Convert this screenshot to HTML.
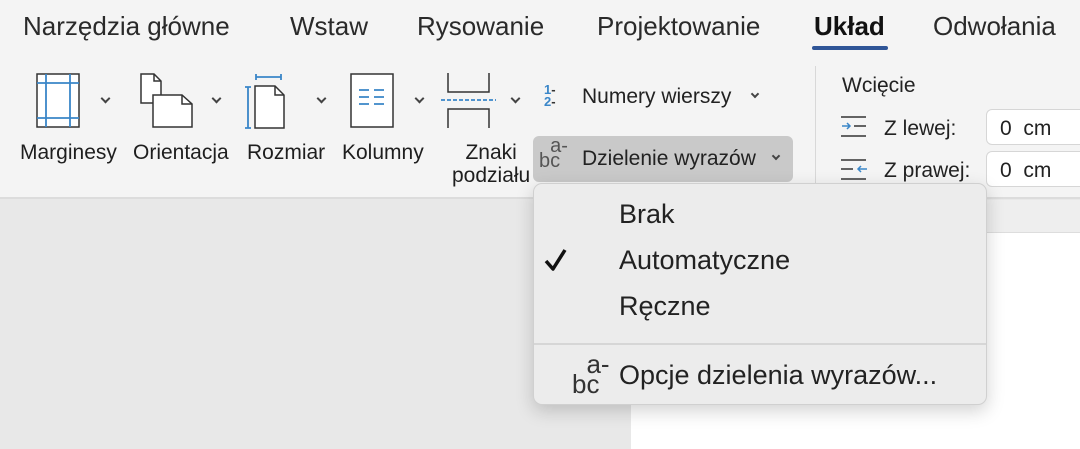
<!DOCTYPE html>
<html><head><meta charset="utf-8"><style>
*{margin:0;padding:0;box-sizing:border-box}
body{width:1080px;height:449px;overflow:hidden;background:#e8e8e8;font-family:"Liberation Sans",sans-serif;color:#222;position:relative}
.rib{position:absolute;left:0;top:0;width:1080px;height:199px;background:#f4f4f4;border-bottom:2px solid #dcdcdc}
.t{position:absolute;top:11px;font-size:26px;color:#2a2a2a;white-space:nowrap}
.lbl{position:absolute;font-size:21px;color:#1e1e1e;text-align:center;line-height:23px;white-space:nowrap}
.chev{position:absolute;width:7px;height:7px;border-right:2px solid #444;border-bottom:2px solid #444;transform:rotate(45deg)}
svg{position:absolute}
.inp{position:absolute;background:#fff;border:1px solid #d6d6d6;border-radius:6px;font-size:21px;padding:7px 0 0 13px;height:36px;width:120px}
.menu{position:absolute;left:533px;top:183px;width:454px;height:222px;background:#ececec;border:1px solid #d0d0d0;border-radius:9px;box-shadow:0 6px 18px rgba(0,0,0,.18)}
.mi{position:absolute;left:85px;font-size:27px;color:#222;white-space:nowrap}
</style></head><body>
<div style="position:absolute;left:631px;top:233px;width:449px;height:216px;background:#fff"></div>
<div style="position:absolute;left:631px;top:200px;width:449px;height:33px;background:#eeeeee;border-bottom:1px solid #ddd"></div>
<div class="rib">
<div class="t" style="left:23px">Narzędzia główne</div>
<div class="t" style="left:290px">Wstaw</div>
<div class="t" style="left:417px">Rysowanie</div>
<div class="t" style="left:597px">Projektowanie</div>
<div class="t" style="left:814px;font-weight:bold;color:#111">Układ</div>
<div style="position:absolute;left:812px;top:46px;width:76px;height:4px;border-radius:2px;background:#2f5597"></div>
<div class="t" style="left:933px">Odwołania</div>

<svg style="left:36px;top:73px" width="46" height="56"><rect x="1" y="1" width="42" height="53" fill="#fff" stroke="#333" stroke-width="1.5"/><path d="M10 1V54M34 1V54M1 10H43M1 45H43" stroke="#3a86c8" stroke-width="1.8"/></svg>
<div class="chev" style="left:102px;top:95px"></div>
<svg style="left:140px;top:73px" width="55" height="56"><path d="M1 1H14L21 8V30H1Z" fill="#fff" stroke="#333" stroke-width="1.5"/><path d="M14 1V8H21" fill="none" stroke="#333" stroke-width="1.5"/><path d="M13 22H42L52 31V54H13Z" fill="#fff" stroke="#333" stroke-width="1.5"/><path d="M42 22V31H52" fill="none" stroke="#333" stroke-width="1.5"/></svg>
<div class="chev" style="left:213px;top:95px"></div>
<svg style="left:244px;top:72px" width="50" height="58"><path d="M12 5H37M12 2V8M37 2V8M4 15V56M1 15H7M1 56H7" stroke="#3a86c8" stroke-width="1.8"/><path d="M11 14H31L40 23V56H11Z" fill="#fff" stroke="#333" stroke-width="1.5"/><path d="M31 14V23H40" fill="none" stroke="#333" stroke-width="1.5"/></svg>
<div class="chev" style="left:318px;top:95px"></div>
<svg style="left:350px;top:73px" width="46" height="56"><rect x="1" y="1" width="42" height="53" fill="#fff" stroke="#333" stroke-width="1.5"/><path d="M9 17H19M24 17H34M9 24H19M24 24H34M9 31H19M24 31H34" stroke="#3a86c8" stroke-width="1.8"/></svg>
<div class="chev" style="left:416px;top:95px"></div>
<svg style="left:440px;top:72px" width="60" height="58"><path d="M8 1V20H49V1M8 56V37H49V56" fill="none" stroke="#333" stroke-width="1.5"/><path d="M1 28H56" stroke="#3a86c8" stroke-width="1.8" stroke-dasharray="4 2"/></svg>
<div class="chev" style="left:512px;top:95px"></div>

<div class="lbl" style="left:20px;top:141px">Marginesy</div>
<div class="lbl" style="left:133px;top:141px">Orientacja</div>
<div class="lbl" style="left:247px;top:141px">Rozmiar</div>
<div class="lbl" style="left:342px;top:141px">Kolumny</div>
<div class="lbl" style="left:452px;top:141px">Znaki<br>podziału</div>

<div style="position:absolute;left:544px;top:84px;font-size:13px;line-height:12px;color:#3a86c8;font-weight:bold">1<span style="color:#333">-</span><br>2<span style="color:#333">-</span></div>
<div style="position:absolute;left:582px;top:85px;font-size:21px">Numery wierszy</div>
<div class="chev" style="left:752px;top:91px;width:6px;height:6px"></div>
<div style="position:absolute;left:533px;top:136px;width:260px;height:46px;background:#c9c9c9;border-radius:6px"></div>
<div style="position:absolute;left:539px;top:139px;font-size:20px;line-height:15px;color:#555">&nbsp;&nbsp;a-<br>bc</div>
<div style="position:absolute;left:582px;top:147px;font-size:21px">Dzielenie wyrazów</div>
<div class="chev" style="left:773px;top:153px;width:6px;height:6px"></div>

<div style="position:absolute;left:815px;top:66px;width:1px;height:120px;background:#d8d8d8"></div>
<div style="position:absolute;left:842px;top:74px;font-size:21px">Wcięcie</div>
<svg style="left:840px;top:115px" width="30" height="24"><path d="M1 2H26M14 11H26M1 21H26" stroke="#333" stroke-width="1.5"/><path d="M2 11H10M7 8L10 11L7 14" stroke="#3a86c8" stroke-width="1.5" fill="none"/></svg>
<div style="position:absolute;left:884px;top:117px;font-size:21px">Z lewej:</div>
<svg style="left:840px;top:158px" width="30" height="24"><path d="M1 2H26M1 11H13M1 21H26" stroke="#333" stroke-width="1.5"/><path d="M18 11H27M21 8L18 11L21 14" stroke="#3a86c8" stroke-width="1.5" fill="none"/></svg>
<div style="position:absolute;left:884px;top:159px;font-size:21px">Z prawej:</div>
<div class="inp" style="left:986px;top:109px">0&nbsp; cm</div>
<div class="inp" style="left:986px;top:151px">0&nbsp; cm</div>
</div>

<div class="menu">
<div class="mi" style="top:15px">Brak</div>
<svg style="left:10px;top:64px" width="24" height="24"><path d="M2 13L9 21L21 2" fill="none" stroke="#111" stroke-width="3.5" stroke-linejoin="round"/></svg>
<div class="mi" style="top:61px">Automatyczne</div>
<div class="mi" style="top:107px">Ręczne</div>
<div style="position:absolute;left:0;top:159px;width:452px;height:2px;background:#d6d6d6"></div>
<div style="position:absolute;left:38px;top:170px;font-size:26px;line-height:20px;color:#333">&nbsp;&nbsp;a-<br>bc</div>
<div class="mi" style="top:176px">Opcje dzielenia wyrazów...</div>
</div>
</body></html>
